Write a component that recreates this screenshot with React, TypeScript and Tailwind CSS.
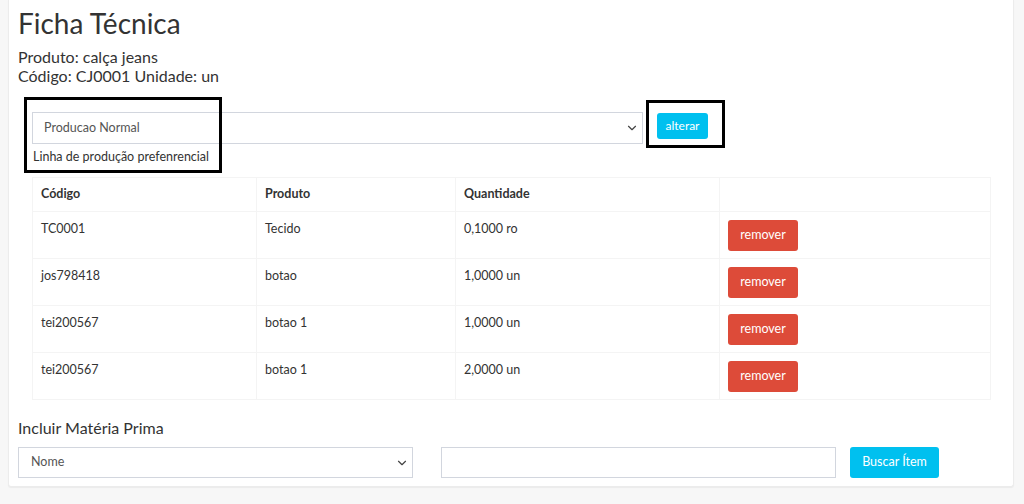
import { ChevronDown } from "lucide-react";

const rows = [
  { codigo: "TC0001", produto: "Tecido", qtd: "0,1000 ro" },
  { codigo: "jos798418", produto: "botao", qtd: "1,0000 un" },
  { codigo: "tei200567", produto: "botao 1", qtd: "1,0000 un" },
  { codigo: "tei200567", produto: "botao 1", qtd: "2,0000 un" },
];

function FakeSelect({ label, className }: { label: string; className: string }) {
  return (
    <div
      className={`flex items-center justify-between border border-[#d2d6de] bg-white text-[12.5px] text-[#555] ${className}`}
    >
      <span>{label}</span>
      <ChevronDown className="h-3.5 w-3.5 text-[#444]" strokeWidth={2} />
    </div>
  );
}

export default function App() {
  return (
    <div
      className="relative h-[504px] w-[1024px] overflow-hidden bg-[#f7f7f7] text-[#333]"
      style={{ fontFamily: "Lato, 'Noto Sans', sans-serif" }}
    >
      {/* card */}
      <div className="ml-2 h-[487px] w-[1006px] rounded-b-[3px] border border-t-0 border-[#ececec] bg-white px-[9px] shadow-[0_1px_1px_rgba(0,0,0,0.05)]">
        <h1 className="pt-[7px] text-[28px] leading-[33px] font-normal">Ficha Técnica</h1>
        <div className="mt-[7px] text-[16px] leading-[19px]">
          <p>Produto: calça jeans</p>
          <p>Código: CJ0001 Unidade: un</p>
        </div>

        {/* linha de producao */}
        <div className="mt-[27px] flex items-start pl-[14px]">
          <div className="w-[611px]">
            <FakeSelect label="Producao Normal" className="h-[32px] pl-[11px] pr-[3px]" />
            <p className="mt-[3px] pl-px text-[12.5px] leading-[20px]">Linha de produção prefenrencial</p>
          </div>
          <button className="mt-px ml-[14px] h-[26px] w-[51px] rounded-[3px] bg-[#00c0ef] text-[12px] text-white">
            alterar
          </button>
        </div>

        {/* tabela */}
        <table className="mt-[10px] ml-[14px] w-[959px] border-collapse border border-[#f4f4f4] text-[12.5px]">
          <thead>
            <tr className="h-[34px]">
              <th className="w-[224px] border border-[#f4f4f4] px-2 text-left font-bold">Código</th>
              <th className="w-[199px] border border-[#f4f4f4] px-2 text-left font-bold">Produto</th>
              <th className="w-[264px] border border-[#f4f4f4] px-2 text-left font-bold">Quantidade</th>
              <th className="border border-[#f4f4f4]"></th>
            </tr>
          </thead>
          <tbody>
            {rows.map((r, i) => (
              <tr key={i} className="h-[47px]">
                <td className="border border-[#f4f4f4] px-2 pt-[8px] align-top">{r.codigo}</td>
                <td className="border border-[#f4f4f4] px-2 pt-[8px] align-top">{r.produto}</td>
                <td className="border border-[#f4f4f4] px-2 pt-[8px] align-top">{r.qtd}</td>
                <td className="border border-[#f4f4f4] px-2 align-middle">
                  <button className="h-[31px] w-[70px] rounded-[3px] bg-[#dd4b39] text-[12.5px] text-white">
                    remover
                  </button>
                </td>
              </tr>
            ))}
          </tbody>
        </table>

        {/* incluir */}
        <h4 className="mt-[18px] text-[16px] leading-[20px]">Incluir Matéria Prima</h4>
        <div className="mt-[9px] flex items-center">
          <FakeSelect label="Nome" className="h-[31px] w-[395px] pl-[12px] pr-[3px]" />
          <div className="ml-[28px] h-[31px] w-[395px] border border-[#d2d6de] bg-white" />
          <button className="ml-[14px] h-[31px] w-[89px] rounded-[3px] bg-[#00c0ef] text-[12.5px] text-white">
            Buscar Ítem
          </button>
        </div>
      </div>

      {/* anotacoes */}
      <div className="absolute left-[24px] top-[97px] h-[76px] w-[198px] border-[3px] border-black" />
      <div className="absolute left-[646px] top-[100px] h-[48px] w-[79px] border-[3px] border-black" />
    </div>
  );
}
